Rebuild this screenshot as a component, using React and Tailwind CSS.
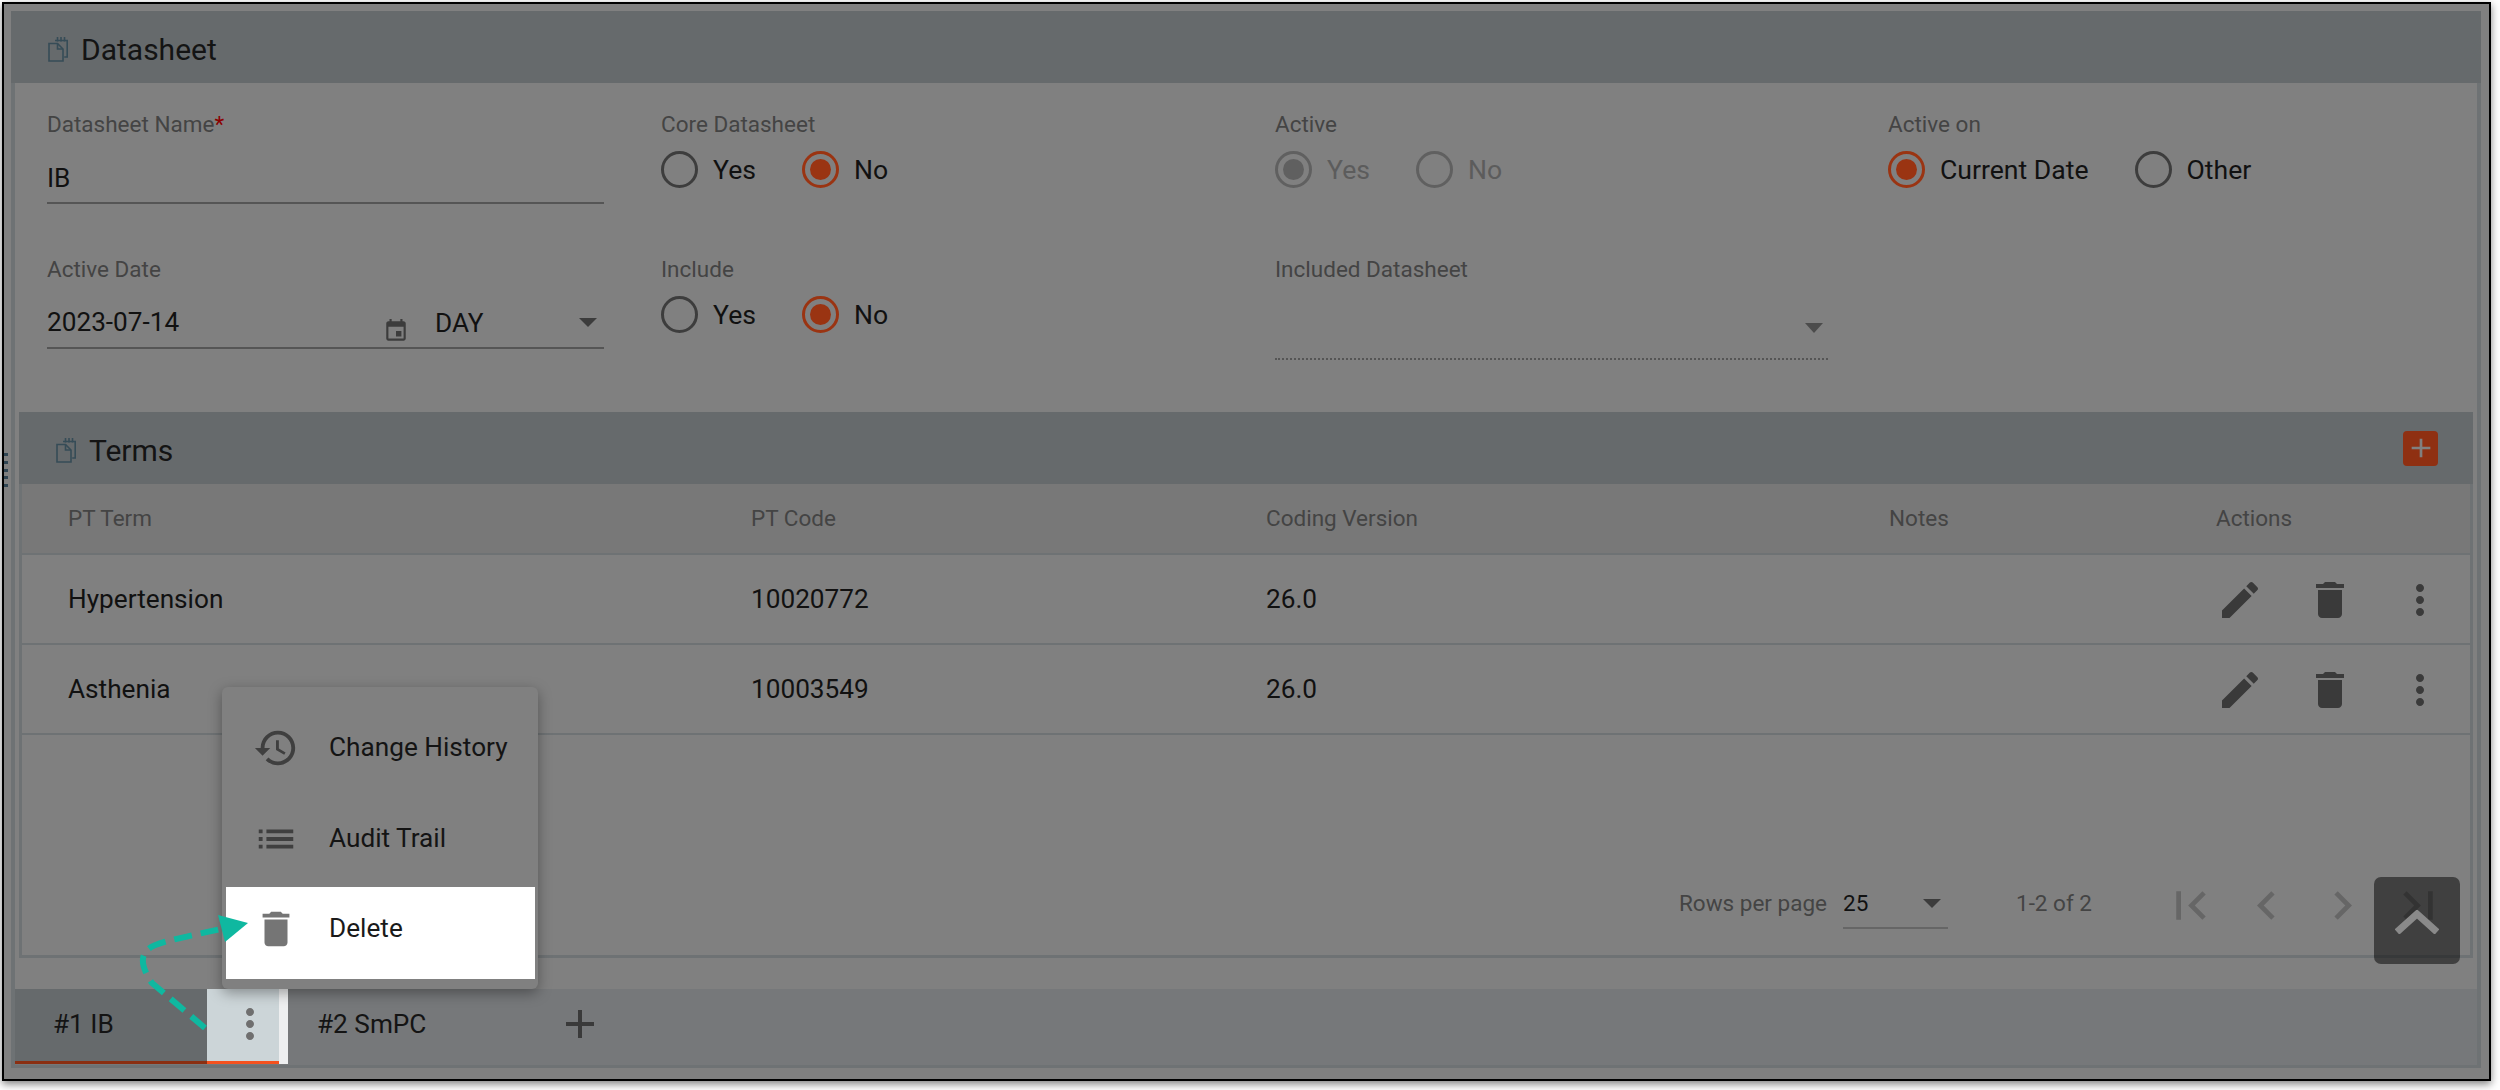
import React from "react";

const EDIT = "M3 17.25V21h3.75L17.81 9.94l-3.75-3.75L3 17.25zM20.71 7.04c.39-.39.39-1.02 0-1.41l-2.34-2.34c-.39-.39-1.02-.39-1.41 0l-1.83 1.83 3.75 3.75 1.83-1.83z";
const TRASH = "M6 19c0 1.1.9 2 2 2h8c1.1 0 2-.9 2-2V7H6v12zM19 4h-3.5l-1-1h-5l-1 1H5v2h14V4z";
const MORE = "M12 8c1.1 0 2-.9 2-2s-.9-2-2-2-2 .9-2 2 .9 2 2 2zm0 2c-1.1 0-2 .9-2 2s.9 2 2 2 2-.9 2-2-.9-2-2-2zm0 6c-1.1 0-2 .9-2 2s.9 2 2 2 2-.9 2-2-.9-2-2-2z";
const HISTORY = "M13 3c-4.97 0-9 4.03-9 9H1l3.89 3.89.07.14L9 12H6c0-3.87 3.13-7 7-7s7 3.13 7 7-3.13 7-7 7c-1.93 0-3.68-.79-4.94-2.06l-1.42 1.42C8.27 19.99 10.51 21 13 21c4.97 0 9-4.03 9-9s-4.03-9-9-9zm-1 5v5l4.28 2.54.72-1.21-3.5-2.08V8H12z";
const LIST = "M3 13h2v-2H3v2zm0 4h2v-2H3v2zm0-8h2V7H3v2zm4 4h14v-2H7v2zm0 4h14v-2H7v2zM7 7v2h14V7H7z";
const FIRST = "M18.41 16.59L13.82 12l4.59-4.59L17 6l-6 6 6 6zM6 6h2v12H6z";
const PREV = "M15.41 7.41L14 6l-6 6 6 6 1.41-1.41L10.83 12z";
const NEXT = "M8.59 16.59L10 18l6-6-6-6-1.41 1.41L13.17 12z";
const LAST = "M5.59 7.41L10.18 12l-4.58 4.59L7 18l6-6-6-6zM16 6h2v12h-2z";
const ADD = "M19 13h-6v6h-2v-6H5v-2h6V5h2v6h6v2z";
const CALENDAR = "M17 12h-5v5h5v-5zM16 1v2H8V1H6v2H5c-1.11 0-1.99.9-1.99 2L3 19c0 1.1.89 2 2 2h14c1.1 0 2-.9 2-2V5c0-1.1-.9-2-2-2h-1V1h-2zm3 18H5V8h14v11z";

function Icon({ d, className }) {
  return (
    <svg viewBox="0 0 24 24" fill="currentColor" className={className}>
      <path d={d} />
    </svg>
  );
}

function DocIcon() {
  return (
    <svg viewBox="0 0 20 26" fill="none" stroke="#364c57" strokeWidth="1.6" className="w-[20px] h-[26px]">
      <path d="M7 4.5h12.2v16.5h-3" />
      <path d="M9.5 1v4.5M13 1v4.5M16.5 1v4.5" />
      <path d="M1 7.5h8.5l5.5 5.5v12H1z" />
      <path d="M9.5 7.5v5.5H15" />
    </svg>
  );
}

function Caret({ className }) {
  return <span className={`w-0 h-0 border-x-[9px] border-x-transparent border-t-[9px] border-t-[#3c3c3c] ${className || ""}`} />;
}

function Radio({ label, checked, disabled }) {
  let ring = "border-[#3d3d3d]";
  let dot = "";
  if (checked) {
    ring = "border-[#9a3412]";
    dot = "bg-[#9a3412]";
  }
  if (disabled) {
    ring = "border-[#606060]";
    dot = checked ? "bg-[#606060]" : "";
  }
  return (
    <div className="flex items-center gap-[15px]">
      <span className={`w-[37px] h-[37px] rounded-full border-[3px] flex items-center justify-center ${ring}`}>
        {dot && <span className={`w-[21px] h-[21px] rounded-full ${dot}`} />}
      </span>
      <span className={`text-[26.6px] leading-[40px] ${disabled ? "text-[#5c5c5c]" : "text-[#111111]"}`}>{label}</span>
    </div>
  );
}

function Field({ label, children }) {
  return (
    <div>
      <div className="text-[22.5px] leading-[28px] text-[#444444]">{label}</div>
      {children}
    </div>
  );
}

function Radios({ children }) {
  return <div className="mt-[13px] h-[37px] flex items-center gap-[46px]">{children}</div>;
}

function SectionHeader({ title, children, left }) {
  return (
    <div className={`h-[72px] shrink-0 bg-[#666a6c] pt-[4px] flex items-center ${left}`}>
      <DocIcon />
      <span className="ml-[13px] text-[30px] text-[#141414]">{title}</span>
      {children}
    </div>
  );
}

const rows = [
  ["Hypertension", "10020772", "26.0"],
  ["Asthenia", "10003549", "26.0"],
];

function TermRow({ term, code, version }) {
  return (
    <div className="h-[90px] shrink-0 pt-[2px] grid grid-cols-[683px_515px_623px_327px_1fr] pl-[46px] items-center border-b-2 border-[#6e7274] text-[26.2px] text-[#111111]">
      <div>{term}</div>
      <div>{code}</div>
      <div>{version}</div>
      <div />
      <div className="flex gap-[42px] text-[#3a3a3a]">
        <Icon d={EDIT} className="w-[48px] h-[48px]" />
        <Icon d={TRASH} className="w-[48px] h-[48px]" />
        <Icon d={MORE} className="w-[48px] h-[48px]" />
      </div>
    </div>
  );
}

function Pagination() {
  return (
    <div className="mt-auto h-[103px] pt-[31px] pl-[1657px] flex items-start text-[22.5px] leading-[40px] text-[#444444]">
      <span className="w-[164px]">Rows per page</span>
      <div className="w-[105px] h-[46px] border-b-2 border-[#666666] flex items-center justify-between pr-[7px] pb-[4px] text-[#111111]">
        <span>25</span>
        <Caret />
      </div>
      <span className="ml-[68px]">1-2 of 2</span>
      <div className="ml-[70px] -mt-[6px] flex gap-[19px] text-[#666666]">
        <Icon d={FIRST} className="w-[57px] h-[57px]" />
        <Icon d={PREV} className="w-[57px] h-[57px]" />
        <Icon d={NEXT} className="w-[57px] h-[57px]" />
        <Icon d={LAST} className="w-[57px] h-[57px]" />
      </div>
    </div>
  );
}

function MenuItem({ d, label, active }) {
  return (
    <div className={`pl-[27px] flex items-center gap-[30px] text-[26.2px] ${active ? "h-[92px] pb-[9px] bg-white text-[#1a1a1a]" : "h-[91px] pb-[6px] text-[#141414]"}`}>
      <Icon d={d} className={`w-[46px] h-[46px] ${active ? "text-[#757575]" : "text-[#3f3f3f]"}`} />
      <span>{label}</span>
    </div>
  );
}

export default function App() {
  return (
    <div className="relative w-[2500px] h-[1090px] bg-white overflow-hidden font-['Roboto',sans-serif]">
      <div className="absolute left-[2px] top-[2px] w-[2489px] h-[1079px] border-2 border-black bg-[#808080] pl-[7px] pt-[7px] shadow-[0_3px_8px_rgba(0,0,0,0.5)]">
        <div className="w-[2470px] h-[1057px] border-x-4 border-b-[3px] border-[#6e7274] flex flex-col">
          <div className="-mx-[4px]">
            <SectionHeader title="Datasheet" left="pl-[37px]" />
          </div>

          <div className="pl-[32px] pt-[27px] h-[329px] shrink-0 grid grid-cols-[614px_614px_613px_1fr] grid-rows-[145px_145px]">
            <Field label={<>Datasheet Name<span className="text-[#8b0000]">*</span></>}>
              <div className="mt-[20px] w-[557px] h-[46px] border-b-2 border-[#555555] text-[26.2px] leading-[40px] text-[#111111]">IB</div>
            </Field>
            <Field label="Core Datasheet">
              <Radios>
                <Radio label="Yes" />
                <Radio label="No" checked />
              </Radios>
            </Field>
            <Field label="Active">
              <Radios>
                <Radio label="Yes" checked disabled />
                <Radio label="No" disabled />
              </Radios>
            </Field>
            <Field label="Active on">
              <Radios>
                <Radio label="Current Date" checked />
                <Radio label="Other" />
              </Radios>
            </Field>

            <Field label="Active Date">
              <div className="mt-[19px] w-[557px] h-[47px] border-b-2 border-[#555555] flex text-[26.2px] leading-[40px] text-[#111111]">
                <span className="w-[336px]">2023-07-14</span>
                <Icon d={CALENDAR} className="w-[26px] h-[26px] mt-[16px] text-[#3c3c3c]" />
                <span className="ml-[26px] w-[144px] pt-[1px]">DAY</span>
                <Caret className="mt-[16px]" />
              </div>
            </Field>
            <Field label="Include">
              <Radios>
                <Radio label="Yes" />
                <Radio label="No" checked />
              </Radios>
            </Field>
            <Field label="Included Datasheet">
              <div className="mt-[19px] w-[553px] h-[58px] border-b-2 border-dotted border-[#555555] flex justify-end pr-[5px] pt-[21px]">
                <span className="w-0 h-0 border-x-[9px] border-x-transparent border-t-[10px] border-t-[#4c4c4c]" />
              </div>
            </Field>
          </div>

          <div className="mx-[4px] h-[546px] shrink-0 flex flex-col border-x-[3px] border-b-[3px] border-[#6e7274]">
            <div className="-mx-[3px]">
              <SectionHeader title="Terms" left="pl-[37px] pr-[35px]">
                <span className="ml-auto w-[35px] h-[35px] -mt-[4px] rounded-[4px] bg-[#8f3012] flex items-center justify-center text-[#808080]">
                  <Icon d={ADD} className="w-[32px] h-[32px]" />
                </span>
              </SectionHeader>
            </div>
            <div className="h-[71px] shrink-0 grid grid-cols-[683px_515px_623px_327px_1fr] pl-[46px] items-center border-b-2 border-[#6e7274] bg-[#787878] text-[22.5px] text-[#444444]">
              <div>PT Term</div>
              <div>PT Code</div>
              <div>Coding Version</div>
              <div>Notes</div>
              <div>Actions</div>
            </div>
            {rows.map((r) => (
              <TermRow key={r[0]} term={r[0]} code={r[1]} version={r[2]} />
            ))}
            <Pagination />
          </div>

          <div className="mt-auto h-[76px] shrink-0 bg-[#76787a] flex items-start text-[26.2px]">
            <div className="w-[192px] h-[75px] pl-[38px] leading-[70px] bg-[#666a6c] border-b-[3px] border-[#8a2f12] text-[#141414]">#1 IB</div>
            <div className="w-[72px] h-[75px] pl-[19px] pt-[11px] bg-[#ccd5d8] border-b-[3px] border-[#f4511e] text-[#6f6f6f]">
              <Icon d={MORE} className="w-[48px] h-[48px]" />
            </div>
            <div className="w-[9px] h-[75px] bg-[#eeeff0]" />
            <div className="ml-[29px] leading-[70px] text-[#141414]">#2 SmPC</div>
            <Icon d={ADD} className="ml-[130px] mt-[11px] w-[48px] h-[48px] text-[#3a3a3a]" />
          </div>
        </div>
      </div>

      {/* drag handle on the frame */}
      <div className="absolute left-[4px] top-[453px] w-[4px] h-[34px] flex flex-col justify-between">
        {[0, 1, 2, 3, 4].map((n) => (
          <span key={n} className="h-[3px] bg-[#2f4553]" />
        ))}
      </div>

      {/* row menu */}
      <div className="absolute left-[222px] top-[687px] w-[316px] h-[302px] pl-[4px] pr-[3px] pb-[10px] rounded-[6px] bg-[#808080] flex flex-col justify-end shadow-[0_4px_14px_rgba(0,0,0,0.35)]">
        <MenuItem d={HISTORY} label="Change History" />
        <MenuItem d={LIST} label="Audit Trail" />
        <MenuItem d={TRASH} label="Delete" active />
      </div>

      {/* callout arrow */}
      <svg className="absolute left-0 top-0 w-[2500px] h-[1090px] pointer-events-none" viewBox="0 0 2500 1090" fill="none">
        <path d="M205 1028 L152 983 C143 970 140 958 146 952 C150 945 160 942 221 929" stroke="#0fb8a0" strokeWidth="6" strokeDasharray="18 9" />
        <path d="M218 915 L248 923 L225 942 Z" fill="#0fb8a0" />
      </svg>

      {/* scroll to top */}
      <div className="absolute left-[2374px] top-[877px] w-[86px] h-[87px] rounded-[7px] bg-black/50 flex justify-center pt-[33px]">
        <svg viewBox="0 0 44 24" fill="none" stroke="#8a8a8a" strokeWidth="7" className="w-[44px] h-[24px]">
          <path d="M2 22 L22 4 L42 22" />
        </svg>
      </div>
    </div>
  );
}
